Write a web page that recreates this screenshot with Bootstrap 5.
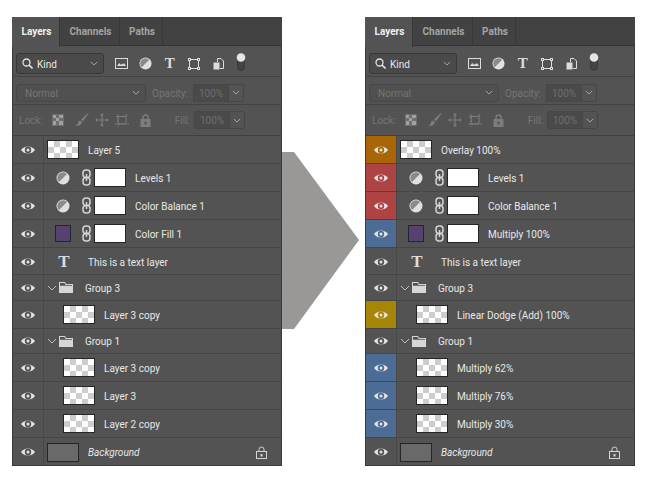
<!DOCTYPE html>
<html lang="en"><head><meta charset="utf-8"><title>Layers</title>
<link href="https://cdn.jsdelivr.net/npm/bootstrap@5.3.0/dist/css/bootstrap.min.css" rel="stylesheet">
<style>
html,body{background:#fff;margin:0}
.stage{width:650px;height:466px;padding:17px 0 0 12px;font:10px/1 Roboto,"Open Sans",sans-serif;color:#e8e8e8}
.panel{width:270px;height:449px;background:#535353;box-shadow:inset 0 0 0 1px #3a3a3a;flex:none;overflow:hidden}
.arrow{flex:none;width:83px;margin-top:-2px}
.tabbar{height:29px;background:#424242;border-bottom:1px solid #333}
.tabx{height:29px;font-weight:700;color:#a4a4a4;border-right:1px solid #383838;display:flex;align-items:center;justify-content:center;flex:none;padding-left:2px}
.tabx.on{background:#535353;color:#f0f0f0;height:30px}
.w48{width:48px}.w60{width:60px}.w43{width:43px}
.tool{height:31px;border-bottom:1px solid #424242;padding-left:4px}
.tool.t1{padding-top:5px}
.tool.t2{height:28px;color:#757575;padding-top:4px}.tool.t3{height:31px;color:#757575;padding-left:7px;border-bottom:1px solid #3f3f3f}
.sel{height:21px;border:1px solid #383838;border-radius:3px;background:#4a4a4a;padding:0 5px;flex:none}
.sel.a{width:88px}.sel.b{width:130px;height:18px;border-color:#474747;background:#505050;color:#757575;padding-left:8px}
.opl{width:37px;margin:0 4px 0 6px;flex:none}
.fil{margin:0 4px 0 auto}
.inp{width:36px;height:18px;background:#4a4a4a;border:1px solid #474747;display:flex;align-items:center;justify-content:center;color:#6e6e6e;flex:none}
.inc{width:15px;height:18px;border:1px solid #474747;border-left:0;display:flex;align-items:center;justify-content:center;border-radius:0 2px 2px 0;flex:none}
.mr25{margin-right:37px}
.ico{flex:none;display:block}
.tico{width:24.300px;display:flex;justify-content:center;flex:none}
.icons{margin-left:5px}
.tgl{margin-left:6px;margin-top:-4px}
.lrow{height:28px;border-bottom:1px solid #454545;padding-right:1px}
.lrow.rt{height:27px;padding-top:1px}
.lrow.rg{height:26px}
.lrow.rh{height:25px}
.eyec{width:31px;height:100%;border-right:1px solid #484848;margin-left:1px;flex:none;display:flex;align-items:center;justify-content:center}
.c-r{background:#ae4343}.c-b{background:#4c6c96}.c-o{background:#a86607}.c-y{background:#a78507}
.thumb{width:32px;height:19px;border:1px solid #262626;flex:none;background-color:#fff;background-image:conic-gradient(#cdcdcd 25%,#fff 0 50%,#cdcdcd 0 75%,#fff 0);background-size:12px 12px}
.thumb.w{background:#fff}.thumb.gr{background:#696969}
.sw{width:16px;height:17px;border:1px solid #262626;background:#57426f;flex:none}
.i0{margin-left:3px}.i1{margin-left:19px}
.lbl{white-space:nowrap;position:relative;top:1px}
.ml9{margin-left:9px}.ml12{margin-left:12px}.ml16{margin-left:16px}
.slotadj{width:16px;margin-left:11px;display:flex;justify-content:center;flex:none}
.linkc{width:13px;margin:0 1px 0 9px;flex:none;display:flex;justify-content:center}
.bt{font:700 17px/1 "Liberation Serif",serif;color:#dcdcdc;width:16px;margin-left:12px;text-align:center;flex:none}
.tt{font:700 15px/1 "Liberation Serif",serif;color:#dcdcdc}
.chev{width:12px;margin-left:2px;flex:none}
.fold{margin-left:1px}
.lock{margin-left:auto;margin-right:14px}
.sp9{margin-left:9px}.sp11{margin-left:11px}.sp6{margin-left:6px}.sp12{margin-left:11.500px}
</style></head><body>
<svg width="0" height="0" class="position-absolute">
<symbol id="eye" viewBox="0 0 14 10"><path fill-rule="evenodd" d="M0 5C3 .3 11 .3 14 5 11 9.700 3 9.700 0 5ZM3.800 5a3.200 3.200 0 1 0 6.400 0 3.200 3.200 0 1 0-6.400 0ZM5.500 5a1.500 1.500 0 1 0 3 0 1.500 1.500 0 1 0-3 0Z" fill="#e4e4e4"/></symbol>
<symbol id="adj" viewBox="0 0 14 14"><circle cx="7" cy="7" r="6.500" fill="#e0e0e0"/><path d="M11 3A5.600 5.600 0 0 0 3 11Z" fill="#8a8a8a"/></symbol>
<symbol id="link" viewBox="0 0 9 17"><g fill="none" stroke="#d4d4d4" stroke-width="1.500"><rect x="1" y="1" width="7" height="7.500" rx="3"/><rect x="1" y="8.500" width="7" height="7.500" rx="3"/><path d="M4.500 5v7"/></g></symbol>
<symbol id="chv" viewBox="0 0 10 6"><path d="M1 1l4 4 4-4" fill="none" stroke="#bdbdbd"/></symbol>
<symbol id="fld" viewBox="0 0 14 11"><path d="M0 0h6l1 2h7v9H0Z" fill="#d6d6d6"/><path d="M1 1h4.500l1 2H13v.800H1Z" fill="#535353"/></symbol>
<symbol id="lck" viewBox="0 0 11 13"><path d="M3 5V3.500a2.500 2.500 0 0 1 5 0V5" fill="none" stroke="#d4d4d4"/><rect x=".5" y="5.500" width="10" height="7" fill="none" stroke="#d4d4d4"/><rect x="4.500" y="8" width="2" height="2.500" fill="#d4d4d4"/></symbol>
<symbol id="img" viewBox="0 0 13 11"><rect x=".5" y=".5" width="12" height="10" fill="none" stroke="#dcdcdc"/><path d="M2 8l2.300-3 1.700 2 1-1.500 1 1 1-1.500L11 8Z" fill="#dcdcdc"/></symbol>
<symbol id="xfm" viewBox="0 0 12 12"><path d="M1.500 1.500h9v9h-9Z" fill="none" stroke="#dcdcdc"/><g fill="#535353" stroke="#dcdcdc"><rect x=".5" y=".5" width="2" height="2"/><rect x="9.500" y=".5" width="2" height="2"/><rect x=".5" y="9.500" width="2" height="2"/><rect x="9.500" y="9.500" width="2" height="2"/></g></symbol>
<symbol id="smt" viewBox="0 0 11 12"><path d="M4.500 4V.5h3.500l2.500 2.500v7.500H7" fill="none" stroke="#dcdcdc"/><path d="M.5 4.500h6v7h-6Z" fill="#dcdcdc"/></symbol>
<symbol id="chk" viewBox="0 0 12 12"><path d="M0 0h12v12H0Z" fill="#6e6e6e"/><path d="M1 1h3v3H1ZM7 1h4v3H7ZM4 4h3v3H4ZM1 7h3v4H1ZM7 7h4v4H7Z" fill="#a0a0a0"/></symbol>
<symbol id="brs" viewBox="0 0 14 14"><path d="M13 0 6 6.500 8 8.500 13.500.5Z M5 7.500C3 8 3 10 2.500 11 2 12 1 12.500 0 13 3.500 13.500 6.500 12 7 9Z" fill="#7d7d7d"/></symbol>
<symbol id="mov" viewBox="0 0 14 14"><path d="M7 0l2 2.500H7.600v4h4V5L14 7l-2.400 2V7.600h-4v4H9L7 14l-2-2.400h1.400v-4h-4V9L0 7l2.400-2v1.400h4v-4H5Z" fill="#7d7d7d"/></symbol>
<symbol id="crp" viewBox="0 0 14 14"><path d="M1 3.500h10V11H3V3.500" fill="none" stroke="#7d7d7d"/><path d="M0 11h14M3 1v13M11 1v2M11 3.500 13 1" fill="none" stroke="#7d7d7d" stroke-dasharray="2 1"/></symbol>
<symbol id="lk2" viewBox="0 0 11 13"><path d="M3 5V3.500a2.500 2.500 0 0 1 5 0V5" fill="none" stroke="#7d7d7d" stroke-width="1.500"/><path d="M.5 5h10v8H.5Z" fill="#7d7d7d"/><rect x="4.500" y="7.500" width="2" height="3" fill="#535353"/></symbol>
</svg>
<div class="stage d-flex">

<div class="panel">
<div class="tabbar d-flex"><div class="tabx on w48">Layers</div><div class="tabx w60">Channels</div><div class="tabx w43">Paths</div></div>
<div class="tool t1 d-flex align-items-center">
<div class="sel a d-flex align-items-center"><svg class="ico" width="11" height="11" viewBox="0 0 11 11"><circle cx="4.500" cy="4.500" r="3.500" fill="none" stroke="#e4e4e4" stroke-width="1.300"/><path d="M7 7l3.500 3.500" stroke="#e4e4e4" stroke-width="1.600"/></svg><span class="ms-1 lbl">Kind</span><svg class="ico ms-auto" width="8" height="5"><use href="#chv"/></svg></div>
<div class="d-flex align-items-center icons"><div class="tico"><svg class="ico" width="13" height="11"><use href="#img"/></svg></div><div class="tico"><svg class="ico" width="13" height="13"><use href="#adj"/></svg></div><div class="tico tt">T</div><div class="tico"><svg class="ico" width="12" height="12"><use href="#xfm"/></svg></div><div class="tico"><svg class="ico" width="11" height="12"><use href="#smt"/></svg></div></div>
<svg class="ico tgl" width="10" height="18" viewBox="0 0 10 18"><rect x="1.500" y="2" width="7" height="15.500" rx="3.500" fill="#444" stroke="#3a3a3a"/><circle cx="5" cy="4.500" r="4.300" fill="#e6e6e6"/></svg>
</div>
<div class="tool t2 d-flex align-items-center">
<div class="sel b d-flex align-items-center"><span class="lbl">Normal</span><svg class="ico ms-auto" width="8" height="5"><use href="#chv"/></svg></div>
<span class="lbl opl">Opacity:</span>
<div class="inp"><span class="lbl">100%</span></div><div class="inc"><svg class="ico" width="8" height="5"><use href="#chv"/></svg></div>
</div>
<div class="tool t3 d-flex align-items-center">
<span class="lbl">Lock:</span>
<svg class="ico sp9" width="12" height="12"><use href="#chk"/></svg><svg class="ico sp11" width="14" height="14"><use href="#brs"/></svg>
<svg class="ico sp6" width="14" height="14"><use href="#mov"/></svg><svg class="ico sp6" width="14" height="14"><use href="#crp"/></svg><svg class="ico sp12" width="11" height="13"><use href="#lk2"/></svg>
<span class="lbl fil">Fill:</span><div class="inp"><span class="lbl">100%</span></div><div class="inc mr25"><svg class="ico" width="8" height="5"><use href="#chv"/></svg></div>
</div>

<div class="lrow d-flex align-items-center"><div class="eyec"><svg class="ico" width="14" height="10"><use href="#eye"/></svg></div><div class="thumb i0"></div><span class="lbl ml9">Layer 5</span></div>
<div class="lrow d-flex align-items-center"><div class="eyec"><svg class="ico" width="14" height="10"><use href="#eye"/></svg></div><div class="slotadj"><svg class="ico" width="14" height="14"><use href="#adj"/></svg></div><div class="linkc"><svg class="ico" width="9" height="17"><use href="#link"/></svg></div><div class="thumb w"></div><span class="lbl ml9">Levels 1</span></div>
<div class="lrow d-flex align-items-center"><div class="eyec"><svg class="ico" width="14" height="10"><use href="#eye"/></svg></div><div class="slotadj"><svg class="ico" width="14" height="14"><use href="#adj"/></svg></div><div class="linkc"><svg class="ico" width="9" height="17"><use href="#link"/></svg></div><div class="thumb w"></div><span class="lbl ml9">Color Balance 1</span></div>
<div class="lrow d-flex align-items-center"><div class="eyec"><svg class="ico" width="14" height="10"><use href="#eye"/></svg></div><div class="slotadj"><div class="sw"></div></div><div class="linkc"><svg class="ico" width="9" height="17"><use href="#link"/></svg></div><div class="thumb w"></div><span class="lbl ml9">Color Fill 1</span></div>
<div class="lrow rt d-flex align-items-center"><div class="eyec"><svg class="ico" width="14" height="10"><use href="#eye"/></svg></div><div class="bt">T</div><span class="lbl ml16">This is a text layer</span></div>
<div class="lrow rg d-flex align-items-center"><div class="eyec"><svg class="ico" width="14" height="10"><use href="#eye"/></svg></div><svg class="ico chev" width="10" height="6"><use href="#chv"/></svg><svg class="ico fold" width="14" height="11"><use href="#fld"/></svg><span class="lbl ml12">Group 3</span></div>
<div class="lrow d-flex align-items-center"><div class="eyec"><svg class="ico" width="14" height="10"><use href="#eye"/></svg></div><div class="thumb i1"></div><span class="lbl ml9">Layer 3 copy</span></div>
<div class="lrow rh d-flex align-items-center"><div class="eyec"><svg class="ico" width="14" height="10"><use href="#eye"/></svg></div><svg class="ico chev" width="10" height="6"><use href="#chv"/></svg><svg class="ico fold" width="14" height="11"><use href="#fld"/></svg><span class="lbl ml12">Group 1</span></div>
<div class="lrow d-flex align-items-center"><div class="eyec"><svg class="ico" width="14" height="10"><use href="#eye"/></svg></div><div class="thumb i1"></div><span class="lbl ml9">Layer 3 copy</span></div>
<div class="lrow d-flex align-items-center"><div class="eyec"><svg class="ico" width="14" height="10"><use href="#eye"/></svg></div><div class="thumb i1"></div><span class="lbl ml9">Layer 3</span></div>
<div class="lrow d-flex align-items-center"><div class="eyec"><svg class="ico" width="14" height="10"><use href="#eye"/></svg></div><div class="thumb i1"></div><span class="lbl ml9">Layer 2 copy</span></div>
<div class="lrow d-flex align-items-center border-0"><div class="eyec"><svg class="ico" width="14" height="10"><use href="#eye"/></svg></div><div class="thumb gr i0"></div><span class="lbl ml9 fst-italic">Background</span><svg class="ico lock" width="11" height="13"><use href="#lck"/></svg></div>
</div>

<svg class="arrow align-self-center" width="83" height="177" viewBox="0 0 83 177"><path d="M0 0H12L77 88 12 177H0Z" fill="#999896"/></svg>

<div class="panel">
<div class="tabbar d-flex"><div class="tabx on w48">Layers</div><div class="tabx w60">Channels</div><div class="tabx w43">Paths</div></div>
<div class="tool t1 d-flex align-items-center">
<div class="sel a d-flex align-items-center"><svg class="ico" width="11" height="11" viewBox="0 0 11 11"><circle cx="4.500" cy="4.500" r="3.500" fill="none" stroke="#e4e4e4" stroke-width="1.300"/><path d="M7 7l3.500 3.500" stroke="#e4e4e4" stroke-width="1.600"/></svg><span class="ms-1 lbl">Kind</span><svg class="ico ms-auto" width="8" height="5"><use href="#chv"/></svg></div>
<div class="d-flex align-items-center icons"><div class="tico"><svg class="ico" width="13" height="11"><use href="#img"/></svg></div><div class="tico"><svg class="ico" width="13" height="13"><use href="#adj"/></svg></div><div class="tico tt">T</div><div class="tico"><svg class="ico" width="12" height="12"><use href="#xfm"/></svg></div><div class="tico"><svg class="ico" width="11" height="12"><use href="#smt"/></svg></div></div>
<svg class="ico tgl" width="10" height="18" viewBox="0 0 10 18"><rect x="1.500" y="2" width="7" height="15.500" rx="3.500" fill="#444" stroke="#3a3a3a"/><circle cx="5" cy="4.500" r="4.300" fill="#e6e6e6"/></svg>
</div>
<div class="tool t2 d-flex align-items-center">
<div class="sel b d-flex align-items-center"><span class="lbl">Normal</span><svg class="ico ms-auto" width="8" height="5"><use href="#chv"/></svg></div>
<span class="lbl opl">Opacity:</span>
<div class="inp"><span class="lbl">100%</span></div><div class="inc"><svg class="ico" width="8" height="5"><use href="#chv"/></svg></div>
</div>
<div class="tool t3 d-flex align-items-center">
<span class="lbl">Lock:</span>
<svg class="ico sp9" width="12" height="12"><use href="#chk"/></svg><svg class="ico sp11" width="14" height="14"><use href="#brs"/></svg>
<svg class="ico sp6" width="14" height="14"><use href="#mov"/></svg><svg class="ico sp6" width="14" height="14"><use href="#crp"/></svg><svg class="ico sp12" width="11" height="13"><use href="#lk2"/></svg>
<span class="lbl fil">Fill:</span><div class="inp"><span class="lbl">100%</span></div><div class="inc mr25"><svg class="ico" width="8" height="5"><use href="#chv"/></svg></div>
</div>

<div class="lrow d-flex align-items-center"><div class="eyec c-o"><svg class="ico" width="14" height="10"><use href="#eye"/></svg></div><div class="thumb i0"></div><span class="lbl ml9">Overlay 100%</span></div>
<div class="lrow d-flex align-items-center"><div class="eyec c-r"><svg class="ico" width="14" height="10"><use href="#eye"/></svg></div><div class="slotadj"><svg class="ico" width="14" height="14"><use href="#adj"/></svg></div><div class="linkc"><svg class="ico" width="9" height="17"><use href="#link"/></svg></div><div class="thumb w"></div><span class="lbl ml9">Levels 1</span></div>
<div class="lrow d-flex align-items-center"><div class="eyec c-r"><svg class="ico" width="14" height="10"><use href="#eye"/></svg></div><div class="slotadj"><svg class="ico" width="14" height="14"><use href="#adj"/></svg></div><div class="linkc"><svg class="ico" width="9" height="17"><use href="#link"/></svg></div><div class="thumb w"></div><span class="lbl ml9">Color Balance 1</span></div>
<div class="lrow d-flex align-items-center"><div class="eyec c-b"><svg class="ico" width="14" height="10"><use href="#eye"/></svg></div><div class="slotadj"><div class="sw"></div></div><div class="linkc"><svg class="ico" width="9" height="17"><use href="#link"/></svg></div><div class="thumb w"></div><span class="lbl ml9">Multiply 100%</span></div>
<div class="lrow rt d-flex align-items-center"><div class="eyec"><svg class="ico" width="14" height="10"><use href="#eye"/></svg></div><div class="bt">T</div><span class="lbl ml16">This is a text layer</span></div>
<div class="lrow rg d-flex align-items-center"><div class="eyec"><svg class="ico" width="14" height="10"><use href="#eye"/></svg></div><svg class="ico chev" width="10" height="6"><use href="#chv"/></svg><svg class="ico fold" width="14" height="11"><use href="#fld"/></svg><span class="lbl ml12">Group 3</span></div>
<div class="lrow d-flex align-items-center"><div class="eyec c-y"><svg class="ico" width="14" height="10"><use href="#eye"/></svg></div><div class="thumb i1"></div><span class="lbl ml9">Linear Dodge (Add) 100%</span></div>
<div class="lrow rh d-flex align-items-center"><div class="eyec"><svg class="ico" width="14" height="10"><use href="#eye"/></svg></div><svg class="ico chev" width="10" height="6"><use href="#chv"/></svg><svg class="ico fold" width="14" height="11"><use href="#fld"/></svg><span class="lbl ml12">Group 1</span></div>
<div class="lrow d-flex align-items-center"><div class="eyec c-b"><svg class="ico" width="14" height="10"><use href="#eye"/></svg></div><div class="thumb i1"></div><span class="lbl ml9">Multiply 62%</span></div>
<div class="lrow d-flex align-items-center"><div class="eyec c-b"><svg class="ico" width="14" height="10"><use href="#eye"/></svg></div><div class="thumb i1"></div><span class="lbl ml9">Multiply 76%</span></div>
<div class="lrow d-flex align-items-center"><div class="eyec c-b"><svg class="ico" width="14" height="10"><use href="#eye"/></svg></div><div class="thumb i1"></div><span class="lbl ml9">Multiply 30%</span></div>
<div class="lrow d-flex align-items-center border-0"><div class="eyec"><svg class="ico" width="14" height="10"><use href="#eye"/></svg></div><div class="thumb gr i0"></div><span class="lbl ml9 fst-italic">Background</span><svg class="ico lock" width="11" height="13"><use href="#lck"/></svg></div>
</div>

</div>
</body></html>
